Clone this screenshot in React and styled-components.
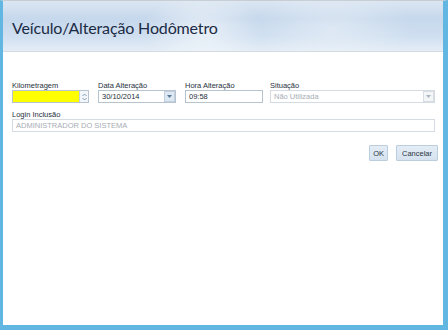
import React from "react"
import styled, { createGlobalStyle } from "styled-components"

const Global = createGlobalStyle`
  html, body { margin: 0; padding: 0; background: #ffffff; }
  * { box-sizing: border-box; }
`

const Frame = styled.div`
  width: 448px;
  height: 330px;
  background: #ffffff;
  border-left: 3px solid #62b6e2;
  border-right: 5px solid #62b6e2;
  border-bottom: 5px solid #62b6e2;
  border-top: 1px solid #c9ced4;
  display: flex;
  flex-direction: column;
  font-family: "Liberation Sans", "DejaVu Sans", sans-serif;
`

const Header = styled.div`
  height: 51px;
  flex-shrink: 0;
  border-bottom: 1px solid #d3dbe4;
  background:
    radial-gradient(ellipse 60px 40px at 200px 30px, rgba(255,255,255,0.55), rgba(255,255,255,0)),
    radial-gradient(ellipse 80px 40px at 330px 28px, rgba(255,255,255,0.35), rgba(255,255,255,0)),
    linear-gradient(180deg, #dbe6f2 0%, #c6d8ec 35%, #cfdff0 70%, #e4edf6 100%);
  padding: 17px 0 0 9px;
`

const Title = styled.h1`
  margin: 0;
  font-family: "Lato", "Open Sans", sans-serif;
  font-weight: 400;
  font-size: 16px;
  letter-spacing: -0.15px;
  color: #1c2b45;
  line-height: 20px;
`

const Body = styled.div`
  padding: 29px 5px 0 9px;
  display: flex;
  flex-direction: column;
`

const Row = styled.div`
  display: flex;
  gap: ${p => p.$gap ?? 9}px;
`

const Field = styled.div`
  width: ${p => p.$w}px;
  flex-shrink: 0;
  display: flex;
  flex-direction: column;
`

const Label = styled.label`
  font-size: 7.5px;
  line-height: 9px;
  color: #26303c;
  height: 8px;
  margin-bottom: 1px;
  white-space: nowrap;
`

const Box = styled.div`
  height: 13px;
  width: ${p => (p.$w ? `${p.$w}px` : "auto")};
  border: 1px solid ${p => (p.$disabled ? "#d4dbe2" : "#b7c3cf")};
  background: ${p => p.$bg || "#ffffff"};
  display: flex;
  align-items: center;
`

const Value = styled.span`
  flex: 1;
  font-size: 7.5px;
  color: ${p => (p.$muted ? "#a7adb4" : "#26303c")};
  padding-left: 3px;
  white-space: nowrap;
  overflow: hidden;
`

const Spinner = styled.div`
  width: 9px;
  height: 11px;
  background: #f2f6fa;
  border-left: 1px solid #c3ced9;
  display: flex;
  align-items: center;
  justify-content: center;
`

const Drop = styled.div`
  width: 11px;
  height: 11px;
  background: ${p => (p.$disabled ? "#f3f5f7" : "#dde8f3")};
  border: 1px solid ${p => (p.$disabled ? "#d7dde3" : "#c1d0de")};
  display: flex;
  align-items: center;
  justify-content: center;
`

const Actions = styled.div`
  display: flex;
  justify-content: flex-end;
  gap: 8px;
  margin-top: 13px;
`

const Button = styled.button`
  height: 16px;
  padding: 0 ${p => p.$pad || 5}px;
  font-family: "Liberation Sans", "DejaVu Sans", sans-serif;
  font-size: 7.5px;
  color: #2a3442;
  background: linear-gradient(180deg, #e4edf6 0%, #d5e2ef 100%);
  border: 1px solid #bccddd;
  border-radius: 1px;
  cursor: pointer;
`

const Arrow = ({ color = "#5a7896" }) => (
  <svg width="5" height="3" viewBox="0 0 5 3">
    <path d="M0 0 H5 L2.5 3 Z" fill={color} />
  </svg>
)

const SpinIcon = () => (
  <svg width="5" height="8" viewBox="0 0 5 8">
    <path d="M0.5 3 L2.5 1 L4.5 3" stroke="#6d89a6" strokeWidth="0.8" fill="none" />
    <path d="M0.5 5 L2.5 7 L4.5 5" stroke="#6d89a6" strokeWidth="0.8" fill="none" />
  </svg>
)

export default function App() {
  return (
    <>
      <Global />
      <Frame>
        <Header>
          <Title>Veículo/Alteração Hodômetro</Title>
        </Header>
        <Body>
          <Row $gap={0}>
            <Field $w={86}>
              <Label>Kilometragem</Label>
              <Box $bg="#ffff00" $w={77}>
                <Value />
                <Spinner>
                  <SpinIcon />
                </Spinner>
              </Box>
            </Field>
            <Field $w={87}>
              <Label>Data Alteração</Label>
              <Box $w={78}>
                <Value>30/10/2014</Value>
                <Drop>
                  <Arrow />
                </Drop>
              </Box>
            </Field>
            <Field $w={85}>
              <Label>Hora Alteração</Label>
              <Box $w={78}>
                <Value>09:58</Value>
              </Box>
            </Field>
            <Field $w={165}>
              <Label>Situação</Label>
              <Box $disabled>
                <Value $muted>Não Utilizada</Value>
                <Drop $disabled>
                  <Arrow color="#a9b4bf" />
                </Drop>
              </Box>
            </Field>
          </Row>
          <Field $w={423} style={{ marginTop: 7 }}>
            <Label>Login Inclusão</Label>
            <Box $disabled>
              <Value $muted>ADMINISTRADOR DO SISTEMA</Value>
            </Box>
          </Field>
          <Actions>
            <Button $pad={3}>OK</Button>
            <Button $pad={5}>Cancelar</Button>
          </Actions>
        </Body>
      </Frame>
    </>
  )
}
